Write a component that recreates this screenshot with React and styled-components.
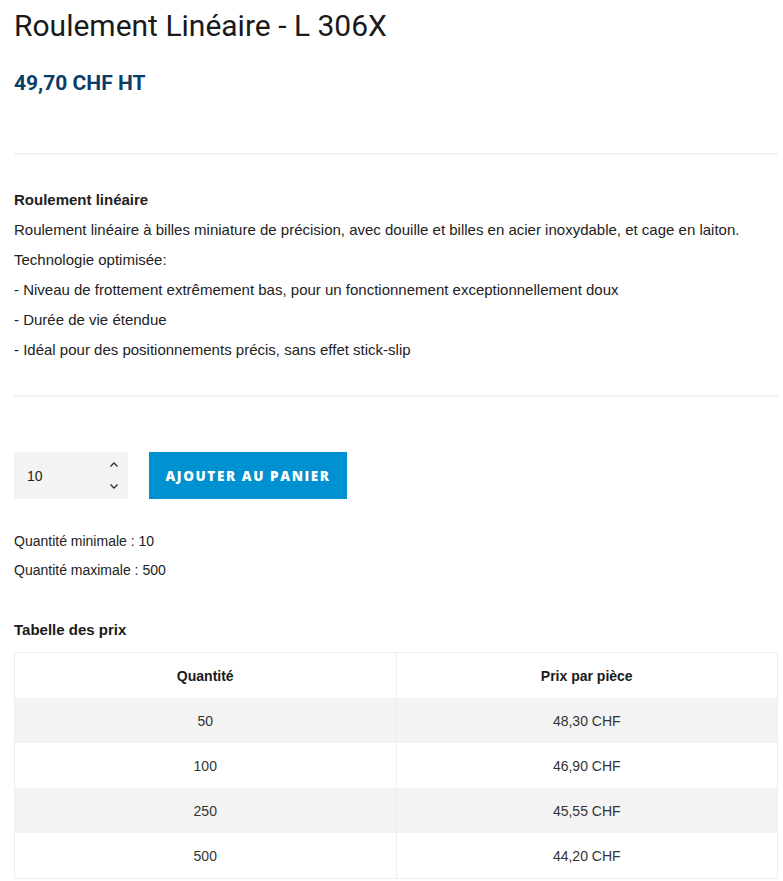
import React, { useState } from "react";
import styled, { createGlobalStyle } from "styled-components";

const GlobalStyle = createGlobalStyle`
  body {
    margin: 0;
    background: #fff;
    font-family: "Liberation Sans", Arial, sans-serif;
    color: #222;
  }
`;

const Page = styled.div`
  padding: 8px 5px 0 14px;
`;

const Title = styled.h1`
  margin: 0;
  font-family: Roboto, "Liberation Sans", sans-serif;
  font-weight: 400;
  font-size: 30px;
  line-height: 36px;
  color: #1a1a1a;
`;

const Price = styled.div`
  margin-top: 27px;
  font-family: Roboto, "Liberation Sans", sans-serif;
  font-weight: 700;
  font-size: 21px;
  line-height: 24px;
  color: #0b3d6b;
`;

const Divider = styled.hr`
  margin: ${(p) => p.$top}px 0 0;
  border: 0;
  height: 2px;
  background: #f2f2f2;
`;

const Description = styled.div`
  margin-top: 30px;
  font-size: 15px;
  line-height: 30px;
  color: #222;

  p {
    margin: 0;
  }
  strong {
    font-weight: 700;
  }
`;

const CartRow = styled.div`
  display: flex;
  gap: 21px;
  margin-top: 55px;
`;

const QtyBox = styled.div`
  display: flex;
  align-items: center;
  justify-content: space-between;
  width: 114px;
  height: 47px;
  box-sizing: border-box;
  padding: 0 9px 0 13px;
  background: #f3f3f3;
  font-size: 14px;
  color: #222;
`;

const Spinner = styled.div`
  display: flex;
  flex-direction: column;
  gap: 15px;
`;

const Arrow = styled.button`
  display: block;
  padding: 0;
  border: 0;
  background: none;
  cursor: pointer;
  line-height: 0;
`;

const AddButton = styled.button`
  width: 198px;
  height: 47px;
  border: 0;
  background: #0091d0;
  color: #fff;
  font-family: "Open Sans", Roboto, sans-serif;
  font-weight: 800;
  font-size: 13.5px;
  letter-spacing: 1.6px;
  cursor: pointer;
`;

const Limits = styled.div`
  margin-top: 28px;
  font-size: 14px;
  line-height: 29px;
  color: #222;
`;

const TableTitle = styled.div`
  margin-top: 35px;
  font-size: 15px;
  font-weight: 700;
  line-height: 20px;
  color: #1a1a1a;
`;

const Table = styled.table`
  width: 100%;
  margin-top: 12px;
  border-collapse: collapse;
  font-size: 14px;
  color: #333;

  th,
  td {
    width: 50%;
    height: 45px;
    padding: 0;
    text-align: center;
    border-left: 1px solid #eeeeee;
    border-right: 1px solid #eeeeee;
  }
  th {
    font-weight: 700;
    color: #1a1a1a;
    border-top: 1px solid #eeeeee;
  }
  tr:last-child td {
    border-bottom: 1px solid #eeeeee;
  }
`;

const Row = styled.tr`
  background: ${(p) => (p.$shaded ? "#f3f3f3" : "#fff")};
`;

const Chevron = ({ up }) => (
  <svg width="10" height="7" viewBox="0 0 10 7" fill="none">
    <path
      d={up ? "M1.5 5.5 L5 2 L8.5 5.5" : "M1.5 1.5 L5 5 L8.5 1.5"}
      stroke="#333"
      strokeWidth="1.4"
    />
  </svg>
);

const prices = [
  { qty: 50, price: "48,30 CHF" },
  { qty: 100, price: "46,90 CHF" },
  { qty: 250, price: "45,55 CHF" },
  { qty: 500, price: "44,20 CHF" },
];

const App = () => {
  const [qty, setQty] = useState(10);

  return (
    <Page>
      <GlobalStyle />
      <Title>Roulement Linéaire - L 306X</Title>
      <Price>49,70 CHF HT</Price>
      <Divider $top={58} />
      <Description>
        <p>
          <strong>Roulement linéaire</strong>
        </p>
        <p>
          Roulement linéaire à billes miniature de précision, avec douille et
          billes en acier inoxydable, et cage en laiton.
        </p>
        <p>Technologie optimisée:</p>
        <p>
          - Niveau de frottement extrêmement bas, pour un fonctionnement
          exceptionnellement doux
        </p>
        <p>- Durée de vie étendue</p>
        <p>- Idéal pour des positionnements précis, sans effet stick-slip</p>
      </Description>
      <Divider $top={30} />
      <CartRow>
        <QtyBox>
          <span>{qty}</span>
          <Spinner>
            <Arrow onClick={() => setQty(Math.min(500, qty + 1))}>
              <Chevron up />
            </Arrow>
            <Arrow onClick={() => setQty(Math.max(10, qty - 1))}>
              <Chevron />
            </Arrow>
          </Spinner>
        </QtyBox>
        <AddButton>AJOUTER AU PANIER</AddButton>
      </CartRow>
      <Limits>
        <div>Quantité minimale : 10</div>
        <div>Quantité maximale : 500</div>
      </Limits>
      <TableTitle>Tabelle des prix</TableTitle>
      <Table>
        <thead>
          <tr>
            <th>Quantité</th>
            <th>Prix par pièce</th>
          </tr>
        </thead>
        <tbody>
          {prices.map((p, i) => (
            <Row key={p.qty} $shaded={i % 2 === 0}>
              <td>{p.qty}</td>
              <td>{p.price}</td>
            </Row>
          ))}
        </tbody>
      </Table>
    </Page>
  );
};

export default App;
